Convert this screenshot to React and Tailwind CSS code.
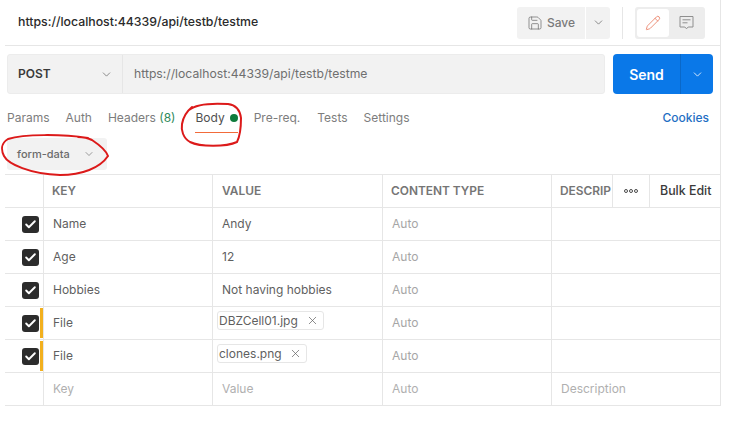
import React from 'react';
import { ChevronDown, Save, Pencil, X, Check } from 'lucide-react';

const rows = [
  { key: 'Name', value: 'Andy' },
  { key: 'Age', value: '12' },
  { key: 'Hobbies', value: 'Not having hobbies' },
  { key: 'File', file: 'DBZCell01.jpg', w: 'w-[107px]' },
  { key: 'File', file: 'clones.png', w: 'w-[90px]' },
];

function Row({ row }) {
  return (
    <div className="flex h-[33px] border-b border-[#e6e6e6] text-[12px] text-[#5f5f5f]">
      <div className="relative w-[38px] shrink-0 flex items-center justify-center pl-[12px]">
        <span className="flex h-[17px] w-[17px] items-center justify-center rounded-[3px] bg-[#2c2c2c]">
          <Check className="h-[13px] w-[13px] text-white" strokeWidth={3.5} />
        </span>
        {row.file && <span className="absolute right-0 top-[1px] h-[30px] w-[3px] bg-[#f2b01e]" />}
      </div>
      <div className="w-[169px] shrink-0 border-l border-[#e6e6e6] pl-[9px] leading-[32px]">{row.key}</div>
      <div className="w-[170px] shrink-0 border-l border-[#e6e6e6] pl-[9px] leading-[32px]">
        {row.file ? (
          <span className={`-ml-[5px] mt-[4px] flex h-[19px] ${row.w} items-center justify-between rounded-[3px] border border-[#e6e6e6] pl-px pr-[4px] leading-none`}>
            {row.file}
            <X className="h-[13px] w-[13px]" strokeWidth={1.3} />
          </span>
        ) : row.value}
      </div>
      <div className="w-[169px] shrink-0 border-l border-[#e6e6e6] pl-[9px] leading-[31px] text-[#a6a6a6]">Auto</div>
      <div className="flex-1 border-l border-[#e6e6e6]" />
    </div>
  );
}

export default function App() {
  return (
    <div className="relative h-[427px] w-[734px] overflow-hidden bg-white font-['Inter',sans-serif]">
      <div className="ml-[5px] h-[406px] w-[716px] border-r border-[#e6e6e6]">
        {/* top bar */}
        <div className="flex h-[46px] items-center border-b border-[#e6e6e6] pl-[13px] pr-[15px]">
          <span className="text-[12.3px] font-medium text-[#2b2b2b]">https://localhost:44339/api/testb/testme</span>
          <div className="ml-auto flex items-center">
            <button className="flex h-[32px] w-[68px] items-center justify-center gap-[4px] rounded-l-[3px] bg-[#f2f2f2] text-[12px] font-medium text-[#7a7a7a]">
              <Save className="h-[16px] w-[16px] text-[#6b6b6b]" strokeWidth={1.1} />
              Save
            </button>
            <button className="ml-px flex h-[32px] w-[24px] items-center justify-center rounded-r-[3px] bg-[#f2f2f2]">
              <ChevronDown className="h-[13px] w-[13px] text-[#5f5f5f]" strokeWidth={1.3} />
            </button>
            <span className="ml-[12px] mr-[12px] h-[32px] w-px bg-[#e6e6e6]" />
            <div className="flex h-[32px] w-[70px] items-center rounded-[3px] bg-[#ededed] p-[2px]">
              <span className="flex h-[28px] w-[32px] items-center justify-center rounded-[3px] bg-white">
                <Pencil className="h-[16px] w-[16px] text-[#e8765a]" strokeWidth={1.2} />
              </span>
              <span className="flex flex-1 items-center justify-center">
                <svg width="15" height="15" viewBox="0 0 15 15" fill="none" stroke="#8f8f8f" strokeWidth="1">
                  <path d="M1 1.5h13v10.5H9.2L7.5 13.8 5.8 12H1z" />
                  <path d="M3.5 4.8h8M3.5 7.8h5" />
                </svg>
              </span>
            </div>
          </div>
        </div>

        {/* request row */}
        <div className="ml-[2px] mt-[8px] flex h-[40px] w-[706px]">
          <div className="flex w-[598px] rounded-[3px] border border-[#ececec] bg-[#f2f2f2]">
            <div className="flex w-[115px] items-center justify-between border-r border-[#e6e6e6] pl-[10px] pr-[9px] text-[12px] font-semibold text-[#3a3a3a]">
              POST
              <ChevronDown className="h-[13px] w-[13px] text-[#5f5f5f]" strokeWidth={1.3} />
            </div>
            <div className="flex items-center pl-[11px] text-[12.2px] text-[#6f6f6f]">https://localhost:44339/api/testb/testme</div>
          </div>
          <div className="ml-[8px] flex w-[100px] rounded-[4px] bg-[#0a78e8] text-white">
            <span className="flex w-[68px] items-center justify-center border-r border-[#0a68c8] text-[14px] font-semibold">Send</span>
            <span className="flex flex-1 items-center justify-center">
              <ChevronDown className="h-[13px] w-[13px]" strokeWidth={1.5} />
            </span>
          </div>
        </div>

        {/* tabs */}
        <div className="ml-[2px] mt-[13px] flex h-[22px] w-[702px] items-center text-[12px] text-[#7d7d7d]">
          <span>Params</span>
          <span className="ml-[16px]">Auth</span>
          <span className="ml-[16px]">Headers <span className="text-[#2f8a5b]">(8)</span></span>
          <span className="relative ml-[20px] flex items-center gap-[5px] text-[#505050]">
            Body
            <span className="h-[8px] w-[8px] rounded-full bg-[#0f7b3c]" />
            <span className="absolute -bottom-[6px] left-0 h-px w-[43px] bg-[#f26b3a]" />
          </span>
          <span className="ml-[16px]">Pre-req.</span>
          <span className="ml-[17px]">Tests</span>
          <span className="ml-[16px]">Settings</span>
          <span className="ml-auto font-medium text-[#1f6fc4]">Cookies</span>
        </div>

        {/* body type */}
        <div className="ml-[2px] mt-[9px] flex h-[32px] w-[100px] items-center justify-between rounded-[3px] bg-[#f2f2f2] pl-[10px] pr-[12px] text-[11px] font-medium text-[#6b6b6b]">
          form-data
          <ChevronDown className="h-[12px] w-[12px]" strokeWidth={1.3} />
        </div>

        {/* table */}
        <div className="mt-[4px] border-t border-[#e6e6e6]">
          <div className="flex h-[33px] border-b border-[#e6e6e6] text-[11.9px] font-semibold text-[#757575]">
            <div className="w-[38px] shrink-0" />
            <div className="w-[169px] shrink-0 border-l border-[#e6e6e6] pl-[8px] leading-[32px]">KEY</div>
            <div className="w-[170px] shrink-0 border-l border-[#e6e6e6] pl-[9px] leading-[32px]">VALUE</div>
            <div className="w-[169px] shrink-0 border-l border-[#e6e6e6] pl-[8px] leading-[32px]">CONTENT TYPE</div>
            <div className="w-[61px] shrink-0 overflow-hidden border-l border-[#e6e6e6] pl-[8px] leading-[32px]">DESCRIP</div>
            <div className="flex w-[37px] shrink-0 items-center justify-center gap-px border-l border-[#e6e6e6]">
              <span className="h-[4px] w-[4px] rounded-full border border-[#4a4a4a]" />
              <span className="h-[4px] w-[4px] rounded-full border border-[#4a4a4a]" />
              <span className="h-[4px] w-[4px] rounded-full border border-[#4a4a4a]" />
            </div>
            <div className="flex-1 border-l border-[#e6e6e6] pl-[10px] text-[12.4px] font-medium leading-[32px] text-[#3a3a3a]">Bulk Edit</div>
          </div>
          {rows.map((row, i) => <Row key={i} row={row} />)}
          <div className="flex h-[33px] border-b border-[#e6e6e6] text-[12px] leading-[31px] text-[#b0b0b0]">
            <div className="w-[38px] shrink-0" />
            <div className="w-[169px] shrink-0 border-l border-[#e6e6e6] pl-[9px]">Key</div>
            <div className="w-[170px] shrink-0 border-l border-[#e6e6e6] pl-[9px]">Value</div>
            <div className="w-[169px] shrink-0 border-l border-[#e6e6e6] pl-[9px]">Auto</div>
            <div className="flex-1 border-l border-[#e6e6e6] pl-[9px]">Description</div>
          </div>
        </div>
      </div>

      {/* red hand-drawn annotations */}
      <svg className="pointer-events-none absolute left-0 top-0" width="734" height="427" fill="none" stroke="#dc1a1a" strokeWidth="2" strokeLinecap="round">
        <path d="M189 110 C196 104 212 103 228 104 C236 105 240 110 241 118 C241 128 240 136 237 142 C226 147 200 147 190 142 C183 138 181 130 182 124 C183 118 186 112 192 107" />
        <path d="M88 138 C62 134 24 134 8 139 C1 143 1 150 4 156 C8 164 30 174 60 175 C82 175 100 168 108 156 C106 150 98 144 92 140 C88 138 84 137 78 137" />
      </svg>
    </div>
  );
}
